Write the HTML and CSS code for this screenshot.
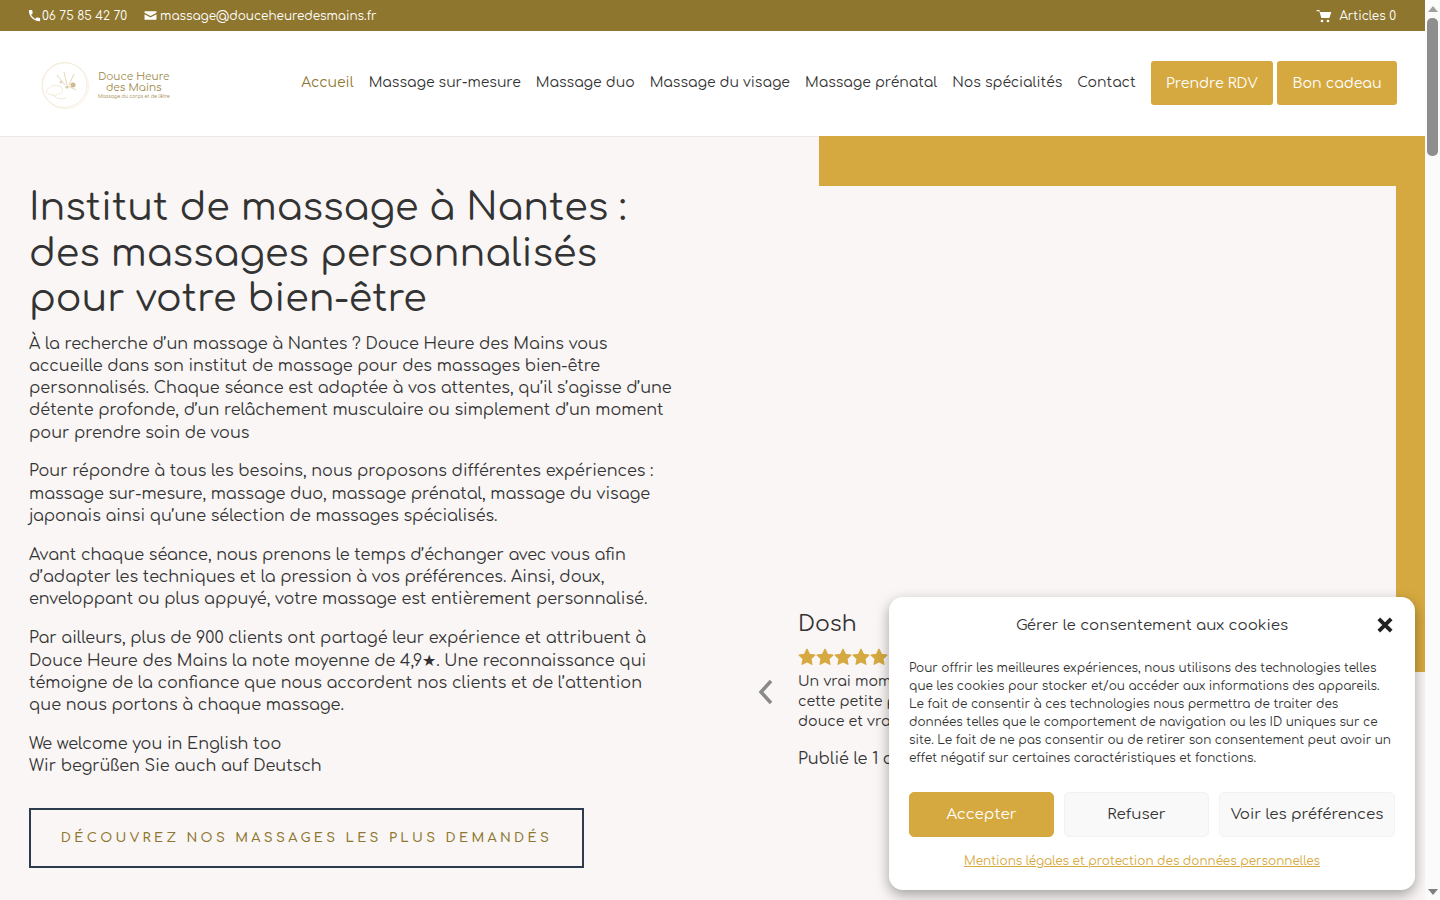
FILE: index.html
```html
<!DOCTYPE html>
<html lang="fr">
<head>
  <meta charset="UTF-8" />
  <title>Douce Heure des Mains</title>
  <link rel="stylesheet" href="styles.css">
</head>
<body>
  <div class="page">
    <div class="top-bar">
      <div class="top-left">
        <span class="top-item"><svg class="top-icon phone" viewBox="0 0 24 24"><path d="M6.600 10.800c1.400 2.800 3.800 5.100 6.600 6.600l2.200-2.200c.3-.3.700-.4 1-.2 1.100.4 2.300.6 3.600.6.600 0 1 .4 1 1V20c0 .6-.4 1-1 1C10.600 21 3 13.400 3 4c0-.6.400-1 1-1h3.500c.6 0 1 .4 1 1 0 1.300.2 2.500.6 3.600.1.300 0 .7-.2 1z"/></svg>06 75 85 42 70</span>
        <span class="top-item"><svg class="top-icon mail" viewBox="0 0 24 24"><path d="M1 4h22v3l-11 6L1 7zM1 9.500l11 6 11-6V20H1z"/></svg>massage@douceheuredesmains.fr</span>
      </div>
      <span class="top-item"><svg class="top-icon cart" viewBox="0 0 24 24"><path d="M1 3h4l1 3h17l-3 9H8L5 5H1zM9 17.500a2 2 0 1 1 0 4 2 2 0 0 1 0-4zm9 0a2 2 0 1 1 0 4 2 2 0 0 1 0-4z"/></svg>Articles 0</span>
    </div>

    <header class="main-header">
      <div class="logo">
        <svg class="logo-mark" viewBox="0 0 50 50">
          <circle cx="24.500" cy="24" r="22.500" fill="none" stroke="#efe3c8" stroke-width=".7"/>
          <circle cx="25.500" cy="25" r="23" fill="none" stroke="#f3ead7" stroke-width=".6"/>
          <path d="M6 31c3-7 10-8 15-5 3 2 2 6-2 7-4 2-8 2-13-2zM12 33c3 4 8 6 14 4" fill="none" stroke="#efe4ca" stroke-width=".8"/>
          <path d="M17 14l8 10M24 11l3 13M34 13l-5 11M28 25l8 4" fill="none" stroke="#dccca2" stroke-width=".8"/>
          <circle cx="33" cy="24" r="2.500" fill="#cdbb8c"/>
          <circle cx="27" cy="26" r="1.500" fill="#d9caa5"/>
          <circle cx="21" cy="21" r="1.500" fill="#e3d7ba"/>
        </svg>
        <div class="logo-text">
          <span>Douce Heure</span>
          <span>des Mains</span>
          <small>Massage du corps et de l'être</small>
        </div>
      </div>
      <nav class="main-nav">
        <a class="nav-link active" href="#">Accueil</a>
        <a class="nav-link" href="#">Massage sur-mesure</a>
        <a class="nav-link" href="#">Massage duo</a>
        <a class="nav-link" href="#">Massage du visage</a>
        <a class="nav-link" href="#">Massage prénatal</a>
        <a class="nav-link" href="#">Nos spécialités</a>
        <a class="nav-link" href="#">Contact</a>
        <div class="nav-buttons">
          <a class="nav-btn" href="#">Prendre RDV</a>
          <a class="nav-btn" href="#">Bon cadeau</a>
        </div>
      </nav>
    </header>

    <main class="hero">
      <section class="intro">
        <h1>Institut de massage à Nantes :<br>des massages personnalisés<br>pour votre bien-être</h1>
        <p>À la recherche d’un massage à Nantes ? Douce Heure des Mains vous accueille dans son institut de massage pour des massages bien-être personnalisés. Chaque séance est adaptée à vos attentes, qu’il s’agisse d’une détente profonde, d’un relâchement musculaire ou simplement d’un moment pour prendre soin de vous</p>
        <p>Pour répondre à tous les besoins, nous proposons différentes expériences : massage sur-mesure, massage duo, massage prénatal, massage du visage japonais ainsi qu’une sélection de massages spécialisés.</p>
        <p>Avant chaque séance, nous prenons le temps d’échanger avec vous afin d’adapter les techniques et la pression à vos préférences. Ainsi, doux, enveloppant ou plus appuyé, votre massage est entièrement personnalisé.</p>
        <p>Par ailleurs, plus de 900 clients ont partagé leur expérience et attribuent à Douce Heure des Mains la note moyenne de 4,9★. Une reconnaissance qui témoigne de la confiance que nous accordent nos clients et de l’attention que nous portons à chaque massage.</p>
        <p>We welcome you in English too<br>Wir begrüßen Sie auch auf Deutsch</p>
        <a class="cta" href="#">Découvrez nos massages les plus demandés</a>
      </section>

      <section class="media">
        <div class="media-frame">
          <div class="media-inner"></div>
        </div>
        <div class="review">
          <svg class="review-arrow" viewBox="0 0 16 28"><path d="M13 3 3 14l10 11" fill="none" stroke="#8a8a8a" stroke-width="3.500"/></svg>
          <div class="review-body">
            <h3>Dosh</h3>
            <div class="stars">
              <svg viewBox="1.500 1.500 21 21"><path d="M12 3l2.800 5.900 6.400.8-4.700 4.400 1.200 6.400-5.700-3.100-5.700 3.100 1.200-6.400-4.700-4.400 6.400-.8z"/></svg>
              <svg viewBox="1.500 1.500 21 21"><path d="M12 3l2.800 5.900 6.400.8-4.700 4.400 1.200 6.400-5.700-3.100-5.700 3.100 1.200-6.400-4.700-4.400 6.400-.8z"/></svg>
              <svg viewBox="1.500 1.500 21 21"><path d="M12 3l2.800 5.900 6.400.8-4.700 4.400 1.200 6.400-5.700-3.100-5.700 3.100 1.200-6.400-4.700-4.400 6.400-.8z"/></svg>
              <svg viewBox="1.500 1.500 21 21"><path d="M12 3l2.800 5.900 6.400.8-4.700 4.400 1.200 6.400-5.700-3.100-5.700 3.100 1.200-6.400-4.700-4.400 6.400-.8z"/></svg>
              <svg viewBox="1.500 1.500 21 21"><path d="M12 3l2.800 5.900 6.400.8-4.700 4.400 1.200 6.400-5.700-3.100-5.700 3.100 1.200-6.400-4.700-4.400 6.400-.8z"/></svg>
            </div>
            <p class="review-text">Un vrai mom<br>cette petite p<br>douce et vra</p>
            <p class="review-date">Publié le 1 d</p>
          </div>
        </div>
      </section>
    </main>

    <aside class="cookie-box">
      <div class="cookie-head">
        <span>Gérer le consentement aux cookies</span>
        <svg class="cookie-close" viewBox="0 0 16 16"><path d="M2.500 2.500l11 11M13.500 2.500l-11 11" stroke="#222" stroke-width="3.400"/></svg>
      </div>
      <p class="cookie-text">Pour offrir les meilleures expériences, nous utilisons des technologies telles que les cookies pour stocker et/ou accéder aux informations des appareils. Le fait de consentir à ces technologies nous permettra de traiter des données telles que le comportement de navigation ou les ID uniques sur ce site. Le fait de ne pas consentir ou de retirer son consentement peut avoir un effet négatif sur certaines caractéristiques et fonctions.</p>
      <div class="cookie-buttons">
        <button class="cookie-btn accept">Accepter</button>
        <button class="cookie-btn">Refuser</button>
        <button class="cookie-btn">Voir les préférences</button>
      </div>
      <a class="cookie-link" href="#">Mentions légales et protection des données personnelles</a>
    </aside>
  </div>

  <div class="scrollbar">
    <span class="scroll-arrow up"></span>
    <div class="scroll-track"><div class="scroll-thumb"></div></div>
    <span class="scroll-arrow down"></span>
  </div>
</body>
</html>
```

FILE: styles.css
```css
* { margin: 0; padding: 0; box-sizing: border-box; }

html, body {
  height: 900px;
  overflow: hidden;
}

body {
  display: flex;
  font-family: 'Comfortaa', 'Noto Sans', sans-serif;
  color: #333;
  background: #fff;
}

a { text-decoration: none; color: inherit; }

.page {
  width: 1425px;
  height: 900px;
  overflow: hidden;
  position: relative;
  flex: none;
}

.top-bar {
  height: 31px;
  background: #8f762e;
  color: #fff;
  font-size: 12px;
  display: flex;
  justify-content: space-between;
  align-items: center;
  padding: 0 29px;
}

.top-left { display: flex; gap: 17px; }
.top-item { display: flex; align-items: center; gap: 1px; }

.top-icon {
  width: 13px;
  height: 13px;
  fill: #fff;
}
.phone { width: 15px; height: 15px; margin: 0 -1px 0 -2px; }
.mail { margin-right: 2px; }
.cart { width: 16px; height: 16px; margin: 0 6px 0 -3px; }

.main-header {
  height: 105px;
  display: flex;
  justify-content: space-between;
  align-items: center;
  padding: 0 28px 2px 40px;
}

.logo { display: flex; align-items: center; gap: 8px; margin-top: 6px; }
.logo-mark { width: 50px; height: 50px; }
.logo-text {
  display: flex;
  flex-direction: column;
  align-items: center;
  font-size: 10.500px;
  line-height: 11px;
  color: #a08a4c;
}
.logo-text small { font-size: 4.700px; line-height: 8px; }

.main-nav {
  display: flex;
  align-items: center;
  gap: 15px;
  font-size: 14px;
}
.nav-link { margin-bottom: 1px; }
.main-nav .active { color: #8f762e; }
.nav-buttons { display: flex; gap: 4px; }
.nav-btn {
  background: #d6a940;
  color: #fff;
  font-size: 14.200px;
  padding: 0 15.500px;
  height: 44px;
  display: flex;
  align-items: center;
  border-radius: 3px;
}

.hero {
  background: #f9f6f5;
  height: 764px;
  display: flex;
  overflow: hidden;
}

.intro {
  width: 700px;
  padding: 49px 0 0 29px;
  border-top: 1px solid #ece6e5;
  font-size: 16px;
  line-height: 22.300px;
}
.intro h1 {
  font-size: 38px;
  line-height: 45.500px;
  font-weight: 400;
  margin-bottom: 10px;
  white-space: nowrap;
}
.intro p { margin-bottom: 16.500px; width: 646px; }

.cta {
  display: block;
  margin-top: 30px;
  border: 2px solid #2c3b4e;
  width: 555px;
  height: 60px;
  line-height: 56px;
  text-align: center;
  text-transform: uppercase;
  white-space: nowrap;
  font-size: 13px;
  letter-spacing: 3.350px;
  color: #8f762e;
  font-weight: 600;
}

.media { flex: 1; position: relative; border-top: 1px solid #ece6e5; }
.media-frame {
  margin: -1px 0 0 119px;
  height: 536px;
  background: #d6a940;
  padding: 50px 29px 0 0;
}
.media-inner { background: #f9f6f5; height: 486px; }

.review {
  display: flex;
  align-items: center;
  gap: 24px;
  position: absolute;
  left: 58px;
  top: 472px;
}
.review-arrow { width: 16px; height: 28px; margin-top: 4px; }
.review-body { width: 300px; }
.review-body h3 { font-size: 22px; font-weight: 400; line-height: 30px; }
.stars { display: flex; margin-top: 8px; height: 20px; }
.stars svg { width: 18px; height: 20px; fill: #d6a940; stroke: #d6a940; stroke-width: 1.500; stroke-linejoin: round; flex: none; }
.review-text { font-size: 14.200px; line-height: 20px; margin-top: 4px; }
.review-date { font-size: 16px; line-height: 22px; margin-top: 17px; }

.cookie-box {
  position: absolute;
  left: 889px;
  top: 597px;
  width: 526px;
  height: 293px;
  background: #fff;
  border-radius: 14px;
  box-shadow: 0 5px 14px rgba(0, 0, 0, 0.35);
  padding: 16px 20px;
}
.cookie-head {
  display: flex;
  justify-content: center;
  position: relative;
  font-size: 15px;
  line-height: 26px;
}
.cookie-close {
  position: absolute;
  right: 1px;
  top: 3px;
  width: 18px;
  height: 18px;
}
.cookie-text {
  font-size: 12px;
  line-height: 18px;
  margin-top: 20px;
}
.cookie-buttons {
  display: grid;
  grid-template-columns: 145px 145px 176px;
  column-gap: 10px;
  margin-top: 25px;
}
.cookie-btn {
  height: 45px;
  font-family: inherit;
  font-size: 15px;
  border: 1px solid #f2f2f2;
  background: #f9f9f9;
  color: #333;
  border-radius: 5px;
  white-space: nowrap;
}
.cookie-btn.accept { background: #d6a940; border-color: #d6a940; color: #fff; }
.cookie-link {
  display: block;
  text-align: center;
  font-size: 12px;
  line-height: 18px;
  margin-top: 15px;
  margin-right: 20px;
  color: #d6a940;
  text-decoration: underline;
}

.scrollbar {
  width: 15px;
  height: 900px;
  background: #fbfbfb;
  display: flex;
  flex-direction: column;
  align-items: center;
}
.scroll-arrow { width: 0; height: 0; margin: 6px 0 5px; border-left: 5px solid transparent; border-right: 5px solid transparent; }
.scroll-arrow.up { border-bottom: 6px solid #a0a0a0; }
.scroll-arrow.down { border-top: 6px solid #7f7f7f; }
.scroll-track { flex: 1; width: 100%; padding: 1px 2px 0; }
.scroll-thumb { height: 138px; background: #8e8e8e; border-radius: 5px; }
```
